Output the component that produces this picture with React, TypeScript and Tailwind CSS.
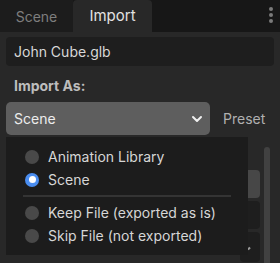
import { ChevronDown } from 'lucide-react';

const options = [
    { label: 'Animation Library', checked: false },
    { label: 'Scene', checked: true },
];

const extraOptions = [
    { label: 'Keep File (exported as is)', checked: false },
    { label: 'Skip File (not exported)', checked: false },
];

function Radio({ checked }: { checked: boolean }) {
    if (checked) {
        return (
            <span className="w-[14px] h-[14px] rounded-full bg-[#4a8df0] flex items-center justify-center">
                <span className="w-[7px] h-[7px] rounded-full bg-white" />
            </span>
        );
    }
    return <span className="w-[14px] h-[14px] rounded-full bg-[#494949]" />;
}

function Option({ label, checked }: { label: string; checked: boolean }) {
    return (
        <div className="h-[23px] flex items-center gap-[9px] pl-[19px]">
            <Radio checked={checked} />
            <span className="text-[14px] text-[#d6d6d6]">{label}</span>
        </div>
    );
}

export default function App() {
    return (
        <div className="relative w-[280px] h-[263px] overflow-hidden bg-[#282828] font-['Inter',sans-serif]">
            {/* Tabs */}
            <div className="h-8 flex bg-[#171717]">
                <div className="w-[73px] bg-[#1c1c1c] flex items-center justify-center text-[14px] text-[#7e7e7e]">
                    Scene
                </div>
                <div className="w-[79px] bg-[#282828] rounded-t-[4px] flex items-center justify-center text-[15px] text-[#e2e2e2]">
                    Import
                </div>
                <div className="flex-1 flex justify-end pr-[7px] pt-[7px]">
                    <div className="flex flex-col gap-[2px]">
                        <span className="w-[4px] h-[4px] rounded-full bg-[#7a7a7a]" />
                        <span className="w-[4px] h-[4px] rounded-full bg-[#7a7a7a]" />
                        <span className="w-[4px] h-[4px] rounded-full bg-[#7a7a7a]" />
                    </div>
                </div>
            </div>

            <div className="px-[6px] pt-[5px]">
                <div className="h-[29px] rounded-[4px] bg-[#1e1e1e] flex items-center pl-[8px] text-[14px] text-[#d8d8d8]">
                    John Cube.glb
                </div>

                <div className="mt-[10px] h-[18px] flex items-center pl-[8px] text-[14px] font-bold text-[#bdbdbd]">
                    Import As:
                </div>

                <div className="mt-[8px] flex items-center">
                    <div className="w-[204px] h-[33px] rounded-[5px] bg-[#5e5e5e] flex items-center justify-between pl-[8px] pr-[5px] text-[14px] text-[#ececec]">
                        Scene
                        <ChevronDown className="w-4 h-4 text-[#f0f0f0]" strokeWidth={3} />
                    </div>
                    <span className="ml-[13px] text-[14px] text-[#b0b0b0]">Preset</span>
                </div>
            </div>

            {/* Things behind the menu */}
            <div className="absolute left-[240px] top-[170px] w-[20px] h-[28px] rounded-[4px] bg-[#474747]" />
            <div className="absolute left-[240px] top-[201px] w-[20px] h-[28px] rounded-[4px] bg-[#1e1e1e]" />
            <div className="absolute left-[240px] top-[232px] w-[20px] h-[30px] rounded-[4px] bg-[#1e1e1e]">
                <span className="absolute left-[8px] top-[15px] w-[2px] h-[3px] bg-[#9a9a9a] rotate-45" />
            </div>
            <div className="absolute left-[264px] top-[147px] w-[6px] h-[120px] rounded-full bg-[#414141]" />

            {/* Dropdown menu */}
            <div className="absolute left-[6px] top-[137px] w-[242px] h-[118px] bg-[#1c1c1c] pt-[8px]">
                {options.map((o) => (
                    <Option key={o.label} label={o.label} checked={o.checked} />
                ))}
                <div className="ml-[17px] mr-[17px] my-[4px] h-[2px] bg-[#343434]" />
                {extraOptions.map((o) => (
                    <Option key={o.label} label={o.label} checked={o.checked} />
                ))}
            </div>
        </div>
    );
}
